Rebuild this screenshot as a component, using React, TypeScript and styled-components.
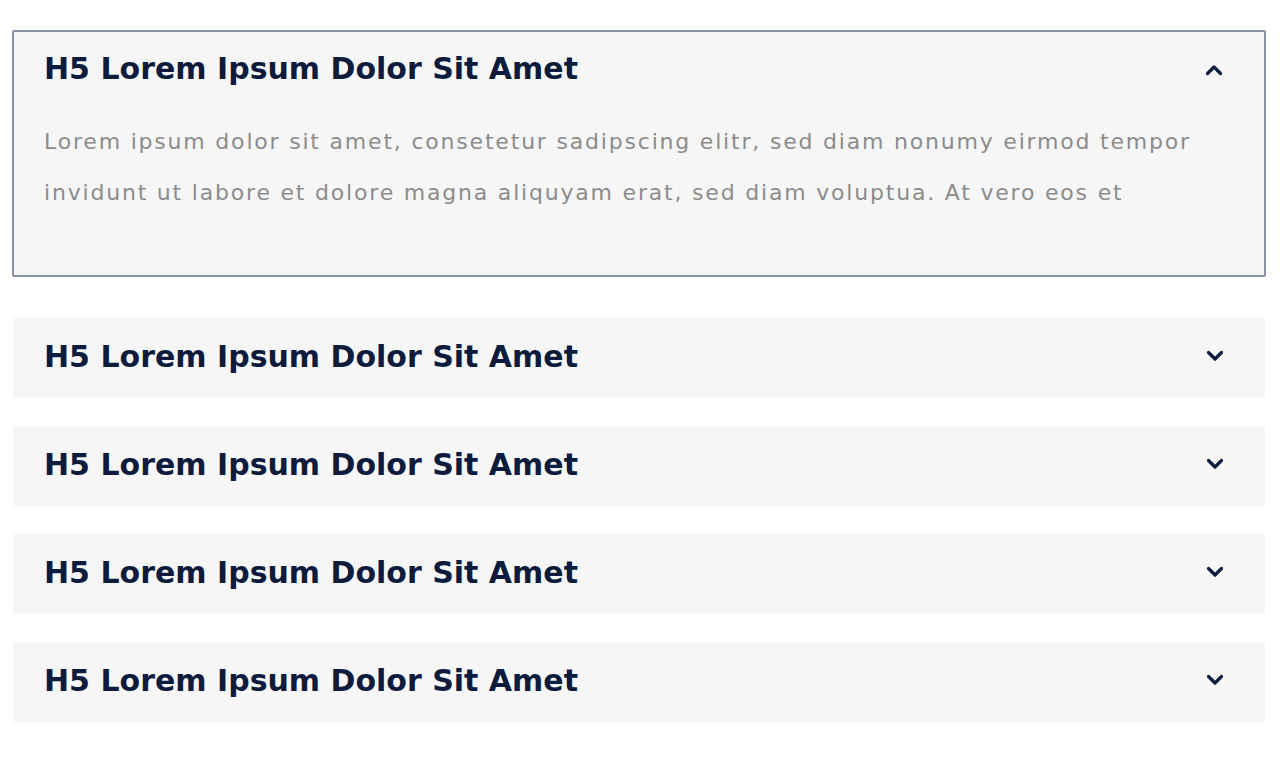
import React from "react";
import styled, { createGlobalStyle } from "styled-components";

const Global = createGlobalStyle`
  html, body { margin: 0; padding: 0; background: #ffffff; }
  body { font-family: "DejaVu Sans", sans-serif; }
`;

const Page = styled.div`
  width: 1280px;
  height: 768px;
  box-sizing: border-box;
  padding: 30px 14px 0 12px;
  display: flex;
  flex-direction: column;
  gap: 28px;
`;

const Item = styled.div<{ $open?: boolean }>`
  box-sizing: border-box;
  background: #f6f6f6;
  border: ${(p) => (p.$open ? "2px solid #8891a5" : "0")};
  border-radius: 2px;
  ${(p) => (p.$open ? "height: 247px; margin-bottom: 13px;" : "height: 80px; margin: 0 1px;")}
`;

const Header = styled.div<{ $open?: boolean }>`
  display: flex;
  align-items: center;
  justify-content: space-between;
  height: ${(p) => (p.$open ? "72px" : "76px")};
  padding: 0 40px 0 ${(p) => (p.$open ? "30px" : "31px")};
  box-sizing: border-box;
`;

const Title = styled.h5`
  margin: 0;
  font-family: "DejaVu Sans", sans-serif;
  font-weight: 700;
  font-size: 30px;
  color: #0d1b3d;
`;

const Body = styled.p`
  margin: 0;
  padding: 12px 30px 0;
  font-family: "DejaVu Sans", sans-serif;
  font-size: 22px;
  letter-spacing: 1.8px;
  line-height: 51px;
  color: #8c8c8c;
  white-space: nowrap;
`;

const ChevronBox = styled.span<{ $open?: boolean }>`
  display: flex;
  margin-top: ${(p) => (p.$open ? "4px" : "0")};
`;

const Chevron = ({ up }: { up?: boolean }) => (
  <ChevronBox $open={up}>
    <svg width="20" height="12" viewBox="0 0 20 12" fill="none">
      <path
        d={up ? "M3.5 9.5 L10 3 L16.5 9.5" : "M3.5 2.5 L10 9 L16.5 2.5"}
        stroke="#0d1b3d"
        strokeWidth="3.2"
        strokeLinecap="round"
        strokeLinejoin="round"
      />
    </svg>
  </ChevronBox>
);

const title = "H5 Lorem Ipsum Dolor Sit Amet";

export default function App() {
  return (
    <>
      <Global />
      <Page>
        <Item $open>
          <Header $open>
            <Title>{title}</Title>
            <Chevron up />
          </Header>
          <Body>
            Lorem ipsum dolor sit amet, consetetur sadipscing elitr, sed diam nonumy eirmod tempor
            <br />
            invidunt ut labore et dolore magna aliquyam erat, sed diam voluptua. At vero eos et
          </Body>
        </Item>
        {[0, 1, 2, 3].map((i) => (
          <Item key={i}>
            <Header>
              <Title>{title}</Title>
              <Chevron />
            </Header>
          </Item>
        ))}
      </Page>
    </>
  );
}
